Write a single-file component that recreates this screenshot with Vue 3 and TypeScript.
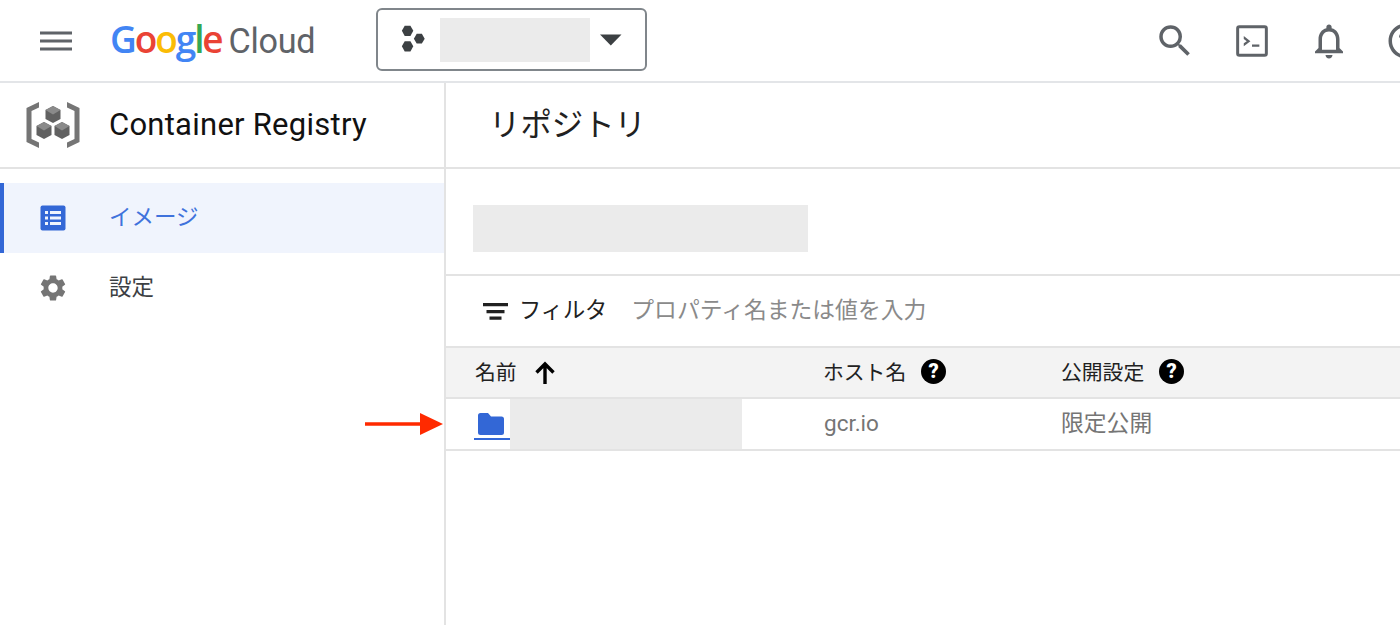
<script setup lang="ts">
const brand: { ch: string; color: string }[] = [
  { ch: 'G', color: '#4285f4' },
  { ch: 'o', color: '#ea4335' },
  { ch: 'o', color: '#fbbc05' },
  { ch: 'g', color: '#4285f4' },
  { ch: 'l', color: '#34a853' },
  { ch: 'e', color: '#ea4335' },
]
</script>

<template>
  <div class="page">
    <header class="top">
      <svg class="menu" width="32" height="22" viewBox="0 0 32 22"><path d="M0 1.500h32v3H0zM0 9.500h32v3H0zM0 17.500h32v3H0z" fill="#5f6368"/></svg>
      <div class="logo">
        <span class="google"><span v-for="(b, i) in brand" :key="i" :style="{ color: b.color }">{{ b.ch }}</span></span>
        <span class="cloud">Cloud</span>
      </div>
      <div class="picker">
        <svg width="30" height="32" viewBox="0 0 26 28"><g fill="#3c4043"><path d="M7.500 1.500l5 0 2.500 4.500-2.500 4.500h-5L5 6z"/><path d="M7.500 15l5 0 2.500 4.500-2.500 4.500h-5L5 19.500z"/><path d="M18 8.500h4.500l2.500 4.300-2.500 4.300H18l-2.500-4.300z"/></g></svg>
        <div class="redact picker-redact"></div>
        <svg class="caret" width="22" height="12" viewBox="0 0 22 12"><path d="M0 .5h21.500L10.800 11.500z" fill="#3c4043"/></svg>
      </div>
      <div class="top-icons">
        <svg width="42" height="42" viewBox="0 0 24 24"><path d="M15.500 14h-.79l-.28-.27A6.470 6.470 0 0 0 16 9.500 6.500 6.500 0 1 0 9.500 16c1.610 0 3.090-.59 4.230-1.570l.27.28v.79l5 4.990L20.490 19l-4.990-5zm-6 0C7.010 14 5 11.990 5 9.500S7.010 5 9.500 5 14 7.010 14 9.500 11.990 14 9.500 14z" fill="#5f6368"/></svg>
        <svg width="42" height="42" viewBox="0 0 24 24"><rect x="3.800" y="3.800" width="16.400" height="16.400" rx="1" fill="none" stroke="#5f6368" stroke-width="1.700"/><path d="M7.300 9.200l3.800 2.900-3.800 2.900v-1.700l1.700-1.200-1.700-1.200zM12 14h4.200v1.300H12z" fill="#5f6368"/></svg>
        <svg width="42" height="42" viewBox="0 0 24 24"><path d="M12 22c1.100 0 2-.9 2-2h-4c0 1.100.9 2 2 2zm6-6v-5c0-3.070-1.630-5.640-4.500-6.320V4c0-.83-.67-1.500-1.500-1.500s-1.500.67-1.500 1.500v.68C7.640 5.360 6 7.920 6 11v5l-2 2v1h16v-1l-2-2zm-2 1H8v-6c0-2.480 1.510-4.500 4-4.500s4 2.020 4 4.500v6z" fill="#5f6368"/></svg>
        <svg width="42" height="42" viewBox="0 0 24 24"><path d="M11 18h2v-2h-2v2zm1-16C6.480 2 2 6.480 2 12s4.480 10 10 10 10-4.480 10-10S17.520 2 12 2zm0 18c-4.410 0-8-3.590-8-8s3.590-8 8-8 8 3.590 8 8-3.590 8-8 8zm0-14c-2.210 0-4 1.790-4 4h2c0-1.100.9-2 2-2s2 .9 2 2c0 2-3 1.750-3 5h2c0-2.250 3-2.500 3-5 0-2.210-1.790-4-4-4z" fill="#5f6368"/></svg>
      </div>
    </header>

    <div class="body">
      <aside class="side">
        <div class="side-head">
          <svg width="56" height="48" viewBox="0 0 56 48">
            <path d="M14 1 1.500 7v34L14 47v-5.500L6.500 38V10L14 6.500z" fill="#757575"/>
            <path d="M42 1 54.500 7v34L42 47v-5.500L49.500 38V10L42 6.500z" fill="#757575"/>
            <path d="M28 5l7.500 4v9L28 22l-7.500-4V9z" fill="#616161"/><path d="M28 5l7.500 4-7.500 4.500L20.500 9z" fill="#8a8a8a"/>
            <path d="M19 21l7.500 4v9L19 38l-7.500-4v-9z" fill="#616161"/><path d="M19 21l7.500 4-7.500 4.500-7.500-4.500z" fill="#8a8a8a"/>
            <path d="M37 21l7.500 4v9L37 38l-7.500-4v-9z" fill="#616161"/><path d="M37 21l7.500 4-7.500 4.500-7.500-4.500z" fill="#8a8a8a"/>
          </svg>
          <span class="side-title">Container Registry</span>
        </div>
        <nav class="nav">
          <div class="nav-item active">
            <svg width="26" height="26" viewBox="0 0 26 26"><rect x="0.500" y="0.500" width="25" height="25" rx="2" fill="#3367d6"/><path d="M5 6h3v3H5zM10 6h11v3H10zM5 11.500h3v3H5zM10 11.500h11v3H10zM5 17h3v3H5zM10 17h11v3H10z" fill="#f0f4fd"/></svg>
            <span>イメージ</span>
          </div>
          <div class="nav-item">
            <svg width="26" height="26" viewBox="2 2 20 20"><path d="M19.140 12.940c.04-.3.060-.61.060-.94 0-.32-.02-.64-.07-.94l2.030-1.580a.49.49 0 0 0 .12-.61l-1.920-3.320a.49.49 0 0 0-.59-.22l-2.390.96c-.5-.38-1.030-.7-1.620-.94l-.36-2.540a.48.48 0 0 0-.48-.41h-3.840c-.24 0-.43.170-.47.410l-.36 2.540c-.59.240-1.130.57-1.620.94l-2.390-.96a.49.49 0 0 0-.59.22L2.740 8.870c-.12.210-.08.470.12.610l2.030 1.580c-.05.3-.09.63-.09.940s.02.640.07.940l-2.030 1.580a.49.49 0 0 0-.12.610l1.920 3.320c.12.220.37.290.59.220l2.390-.96c.5.380 1.030.7 1.620.94l.36 2.540c.05.240.24.410.48.410h3.840c.24 0 .44-.17.470-.41l.36-2.540c.59-.24 1.130-.56 1.620-.94l2.390.96c.22.080.47 0 .59-.22l1.920-3.320a.49.49 0 0 0-.12-.61l-2.010-1.580zM12 15.600A3.610 3.610 0 0 1 8.400 12c0-1.980 1.620-3.600 3.600-3.600s3.600 1.620 3.600 3.600-1.620 3.600-3.600 3.600z" fill="#757575"/></svg>
            <span>設定</span>
          </div>
        </nav>
      </aside>

      <main class="main">
        <div class="title-row"><span>リポジトリ</span></div>
        <div class="block-row"><div class="redact main-redact"></div></div>
        <div class="filter-row">
          <svg width="25" height="20" viewBox="0 0 25 20"><path d="M0 2h25v3.200H0zM3.500 9h18v3.200h-18zM6.500 15.500h12v3.200h-12z" fill="#212121"/></svg>
          <span class="filter-label">フィルタ</span>
          <span class="filter-hint">プロパティ名または値を入力</span>
        </div>
        <div class="grid head-row">
          <div class="cell first">
            <span class="head-text">名前</span>
            <svg class="up" width="22" height="24" viewBox="0 0 22 24"><path d="M11 23V3M2.500 11.500 11 3l8.500 8.500" fill="none" stroke="#000" stroke-width="3.400"/></svg>
          </div>
          <div class="cell"><span class="head-text">ホスト名</span><span class="help">?</span></div>
          <div class="cell"><span class="head-text">公開設定</span><span class="help">?</span></div>
        </div>
        <div class="grid data-row">
          <div class="cell first name-cell">
            <span class="folder-link">
              <svg width="26" height="22" viewBox="0 0 26 22"><path d="M2.500 0H10l3 3.500h10.500A2.500 2.500 0 0 1 26 6v13.500a2.500 2.500 0 0 1-2.500 2.500h-21A2.500 2.500 0 0 1 0 19.500v-17A2.500 2.500 0 0 1 2.500 0z" fill="#3367d6"/></svg>
            </span>
            <div class="redact name-redact"></div>
          </div>
          <div class="cell value latin"><span class="latin-text">gcr.io</span></div>
          <div class="cell value"><span class="value-text">限定公開</span></div>
        </div>
      </main>
    </div>

    <svg class="arrow" width="78" height="22" viewBox="0 0 78 22"><path d="M0 9.200h55v3.600H0zM55 0l23 11-23 11z" fill="#ff2a00"/></svg>
  </div>
</template>

<style>
html, body { margin: 0; background: #fff; overflow: hidden; }
</style>

<style scoped>
.page {
  position: relative;
  width: 1400px;
  height: 625px;
  overflow: hidden;
  display: flex;
  flex-direction: column;
  font-family: Roboto, "Noto Sans CJK JP", sans-serif;
  color: #212121;
  background: #fff;
}
.top {
  box-sizing: border-box;
  height: 83px;
  flex: none;
  border-bottom: 2px solid #e3e5e8;
  display: flex;
  align-items: center;
  padding-left: 40px;
}
.menu { flex: none; }
.logo {
  margin-left: 38px;
  width: 266px;
  display: flex;
  align-items: baseline;
  gap: 7px;
  white-space: nowrap;
  font-family: "Open Sans", sans-serif;
  position: relative;
  top: -2px;
}
.google { font-size: 37px; font-weight: 600; letter-spacing: -2.100px; }
.cloud { color: #5f6368; font-family: Roboto, sans-serif; font-size: 34.200px; letter-spacing: -.3px; }
.picker {
  box-sizing: border-box;
  width: 271px;
  height: 63px;
  border: 2px solid #80868b;
  border-radius: 6px;
  display: flex;
  align-items: center;
  padding-left: 18px;
  flex: none;
  position: relative;
  top: -1px;
}
.redact { background: #ebebeb; }
.picker-redact { width: 150px; height: 44px; margin-left: 14px; }
.caret { margin-left: 10px; }
.top-icons {
  display: flex;
  gap: 35px;
  margin-left: auto;
  margin-right: -27px;
  flex: none;
}
.body { flex: 1; display: flex; min-height: 0; }
.side {
  box-sizing: border-box;
  width: 446px;
  flex: none;
  border-right: 2px solid #e3e3e3;
}
.side-head {
  box-sizing: border-box;
  height: 86px;
  border-bottom: 2px solid #e3e3e3;
  display: flex;
  align-items: center;
  padding-left: 25px;
}
.side-title {
  margin-left: 28px;
  padding-bottom: 2px;
  font-size: 31px;
  letter-spacing: .25px;
  color: #111;
}
.nav { padding-top: 14px; }
.nav-item {
  height: 70px;
  display: flex;
  align-items: center;
  padding-left: 40px;
  font-size: 22.500px;
  color: #3c4043;
}
.nav-item span { margin-left: 43px; padding-bottom: 6px; }
.nav-item.active {
  background: #f0f4fd;
  box-shadow: inset 4px 0 0 #3367d6;
  color: #3f72dc;
}
.main { flex: 1; min-width: 0; }
.title-row {
  box-sizing: border-box;
  height: 86px;
  border-bottom: 2px solid #e3e3e3;
  display: flex;
  align-items: center;
  padding-left: 43px;
  font-size: 31.400px;
  color: #212121;
}
.title-row span { padding-bottom: 6px; }
.block-row {
  box-sizing: border-box;
  height: 107px;
  border-bottom: 2px solid #e3e3e3;
  padding: 36px 0 0 27px;
}
.main-redact { width: 335px; height: 47px; }
.filter-row {
  box-sizing: border-box;
  height: 70px;
  display: flex;
  align-items: center;
  padding-left: 37px;
}
.filter-label { margin-left: 11px; font-size: 22.200px; color: #212121; padding-bottom: 6px; }
.filter-hint { margin-left: 24px; font-size: 22.800px; color: #8a8a8a; padding-bottom: 6px; }
.grid {
  display: grid;
  grid-template-columns: 377px 238px 1fr;
  box-sizing: border-box;
}
.head-row {
  height: 53px;
  background: #f3f3f3;
  border-top: 2px solid #e3e3e3;
  border-bottom: 2px solid #e3e3e3;
  font-size: 20.800px;
  color: #212121;
}
.head-text { padding-bottom: 3px; }
.data-row {
  height: 52px;
  border-bottom: 2px solid #e3e3e3;
  font-size: 22.500px;
  color: #757575;
}
.latin-text { padding-bottom: 2px; margin-left: 1px; }
.value-text { font-size: 22.800px; padding-bottom: 6px; }
.cell { display: flex; align-items: center; }
.first { padding-left: 29px; }
.up { margin-left: 17px; margin-top: 1px; }
.help {
  margin-left: 15px;
  margin-bottom: 3px;
  width: 25px;
  height: 25px;
  border-radius: 50%;
  background: #000;
  color: #fff;
  font-size: 20px;
  font-weight: 900;
  display: flex;
  align-items: center;
  justify-content: center;
}
.name-cell { padding-left: 29px; align-items: stretch; }
.folder-link {
  width: 36px;
  margin-left: -1px;
  box-sizing: border-box;
  border-bottom: 2px solid #3367d6;
  margin-bottom: 9px;
  padding: 14px 0 0 4px;
  flex: none;
}
.folder-link svg { display: block; }
.name-redact { width: 232px; }
.arrow { position: absolute; left: 365px; top: 413px; }
</style>
